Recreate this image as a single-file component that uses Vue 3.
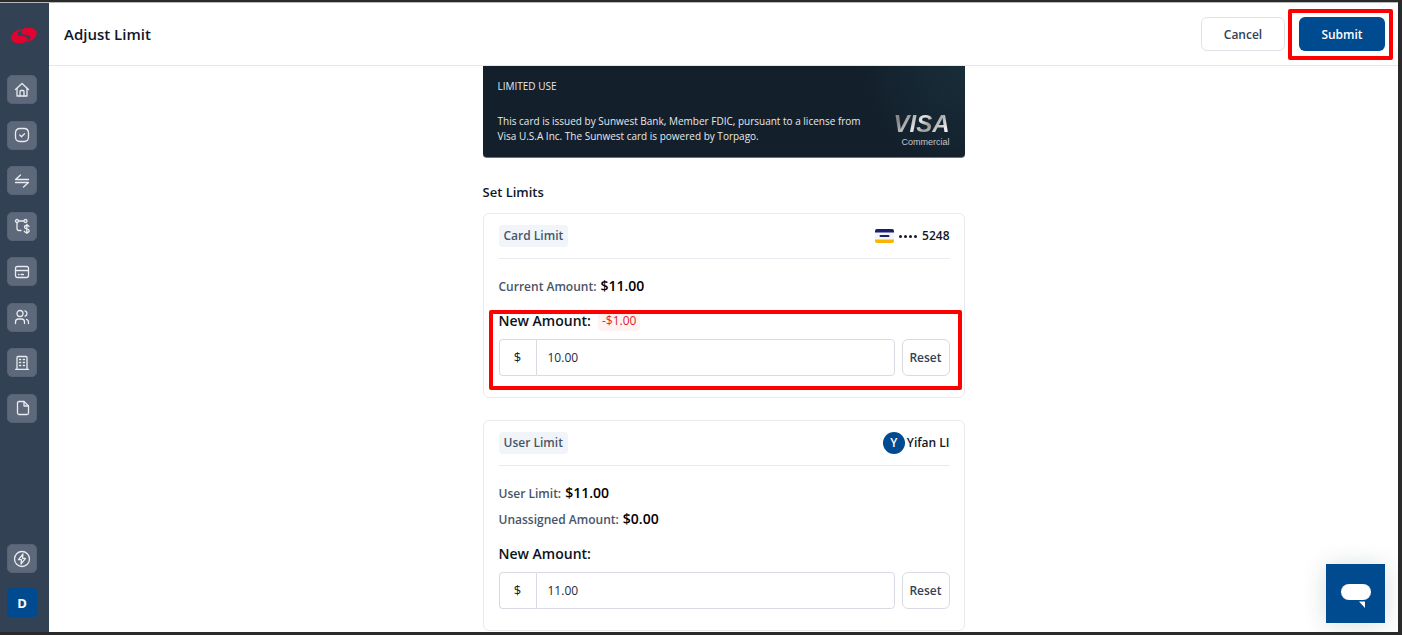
<script setup>
import { ref } from 'vue'

const cardAmount = ref('10.00')
const userAmount = ref('11.00')

const navItems = [
  { label: 'Home', paths: ['M1.5 7.500 8 1.500 14.500 7.500', 'M3 6.500V14h10V6.500', 'M6 14V9.500q0-1 1-1h2q1 0 1 1V14'] },
  { label: 'Tasks', paths: ['M6 1.500h4Q14.500 1.500 14.500 6v4Q14.500 14.500 10 14.500H6Q1.500 14.500 1.500 10V6Q1.500 1.500 6 1.500Z', 'M5.800 8l1.700 1.700 3-3'] },
  { label: 'Transfers', paths: ['M14.500 6.500h-13L6.500 2', 'M1.500 9.500h13L9.500 14'] },
  { label: 'Bill pay', paths: ['M4.500 3h5.500', 'M3 4.500v6q0 2 2 2h2', 'M4.500 3a1.500 1.500 0 1 1-3 0a1.500 1.500 0 1 1 3 0', 'M13 3a1.500 1.500 0 1 1-3 0a1.500 1.500 0 1 1 3 0', 'M15 8.500q-.5-1-2.200-1-2.300 0-2.300 1.700 0 1.300 2.300 1.700 2.400.5 2.400 1.900 0 1.700-2.400 1.700-2 0-2.500-1.300', 'M12.800 6.300v9.500'] },
  { label: 'Cards', paths: ['M3.500 2.500h9q2 0 2 2v7q0 2-2 2h-9q-2 0-2-2v-7Q1.500 2.500 3.500 2.500Z', 'M1.500 6.500h13', 'M4.500 10.500h.5', 'M7 10.500h2.500'] },
  { label: 'Users', paths: ['M9 4.500a3 3 0 1 1-6 0a3 3 0 1 1 6 0', 'M1.500 14.500v-1.500q0-3 3-3h3q3 0 3 3v1.500', 'M11 1.800q2 .7 2 2.700t-2 2.700', 'M12.500 10.300q2 .7 2 2.700v1.500'] },
  { label: 'Company', paths: ['M3 14V2.500q0-1 1-1h8q1 0 1 1V14', 'M1.500 14.300h13', 'M5.500 4.500h1.200M9.300 4.500h1.200M5.500 7.500h1.200M9.300 7.500h1.200M5.500 10.500h1.200M9.300 10.500h1.200'] },
  { label: 'Documents', paths: ['M10 1.500H5q-1.500 0-1.500 1.500v10q0 1.500 1.500 1.500h8q1.500 0 1.500-1.500V6Z', 'M10 1.500V6H14.500'] },
]
</script>

<template>
  <div class="frame">
    <div class="app">
      <aside class="sidebar">
        <svg class="logo" viewBox="32 82 78 51" aria-label="Sunwest">
          <path d="M70 88C46 89 33 102 33 115C33 126 45 132 62 131C73 130 82 124 81 116C80 110 70 110 61 109C51 108 49 103 54 97C58 92 63 90 70 88Z" fill="#e4032e" />
          <path d="M72 127C96 126 109 113 109 100C109 89 97 83 80 84C69 85 61 91 62 98C63 104 72 105 81 106C91 107 93 112 88 118C84 123 79 125 72 127Z" fill="#e4032e" />
        </svg>
        <nav class="nav">
          <a v-for="item in navItems" :key="item.label" href="#" class="tile" :aria-label="item.label">
            <svg viewBox="0 0 16 16" class="icon"><path v-for="d in item.paths" :key="d" :d="d" /></svg>
          </a>
        </nav>
        <div class="foot">
          <a href="#" class="tile" aria-label="Quick actions">
            <svg viewBox="0 0 18 18" class="icon bolt">
              <circle cx="9" cy="9" r="7.500" /><path d="M10 4 5.500 9.700h3L8 14l4.500-5.700h-3Z" />
            </svg>
          </a>
          <button type="button" class="avatar-tile">D</button>
        </div>
      </aside>

      <div class="page">
        <header class="header">
          <h1>Adjust Limit</h1>
          <div class="actions">
            <button type="button" class="btn cancel">Cancel</button>
            <div class="submit-wrap">
              <button type="button" class="btn submit">Submit</button>
              <span class="mark mark-submit"></span>
            </div>
          </div>
        </header>

        <main class="content">
          <div class="column">
            <section class="bank-card">
              <p class="limited">LIMITED USE</p>
              <div class="legal-row">
                <p class="legal">This card is issued by Sunwest Bank, Member FDIC, pursuant to a license from<br />Visa U.S.A Inc. The Sunwest card is powered by Torpago.</p>
                <div class="visa"><span class="visa-name">VISA</span><span class="visa-kind">Commercial</span></div>
              </div>
            </section>

            <h2>Set Limits</h2>

            <section class="panel">
              <div class="panel-head">
                <span class="chip">Card Limit</span>
                <span class="owner">
                  <svg class="mini-card" viewBox="0 0 19 14" aria-hidden="true">
                    <rect x="0" y="0" width="19" height="14" rx="2" fill="#f4f5fa" />
                    <path d="M0 3.500V2Q0 0 2 0H17Q19 0 19 2V3.500Z" fill="#1a1f71" />
                    <path d="M0 10.500V12Q0 14 2 14H17Q19 14 19 12V10.500Z" fill="#f7b600" />
                    <rect x="4.500" y="6" width="10" height="2" rx="1" fill="#1a1f71" />
                  </svg>
                  <span class="dots"><i></i><i></i><i></i><i></i></span>
                  <span>5248</span>
                </span>
              </div>
              <dl class="facts">
                <div><dt>Current Amount:</dt><dd>$11.00</dd></div>
              </dl>
              <div class="field">
                <div class="label-row">
                  <label for="card-amount">New Amount:</label>
                  <span class="delta">-$1.00</span>
                </div>
                <div class="control">
                  <span class="currency">$</span>
                  <input id="card-amount" v-model="cardAmount" type="text" />
                  <button type="button" class="reset">Reset</button>
                </div>
                <span class="mark mark-field"></span>
              </div>
            </section>

            <section class="panel">
              <div class="panel-head">
                <span class="chip">User Limit</span>
                <span class="owner person"><span class="avatar">Y</span>Yifan LI</span>
              </div>
              <dl class="facts">
                <div><dt>User Limit:</dt><dd>$11.00</dd></div>
                <div><dt>Unassigned Amount:</dt><dd>$0.00</dd></div>
              </dl>
              <div class="field">
                <div class="label-row"><label for="user-amount">New Amount:</label></div>
                <div class="control">
                  <span class="currency">$</span>
                  <input id="user-amount" v-model="userAmount" type="text" />
                  <button type="button" class="reset">Reset</button>
                </div>
              </div>
            </section>
          </div>
        </main>
      </div>

      <button type="button" class="chat" aria-label="Open chat">
        <svg viewBox="0 0 30 24"><rect x="0" y="0" width="30" height="16" rx="8" fill="#fff" /><path d="M18 17.500h6V24Z" fill="#fff" /></svg>
      </button>
    </div>
  </div>
</template>

<style>
body {
  background: #2b2a2a;
}
</style>

<style scoped>
* {
  box-sizing: border-box;
}
.frame {
  height: 100vh;
  padding: 2px 4px 3px 0;
  background: #2b2a2a;
  font-family: "Open Sans", "Noto Sans", sans-serif;
  font-size: 12px;
  color: #0f172a;
}
.app {
  position: relative;
  display: flex;
  height: 100%;
  overflow: hidden;
  background: #fff;
  border-top: 1px solid #b9b9b9;
}
h1, h2, p, dl, dd {
  margin: 0;
}
button, input {
  font-family: inherit;
}
.sidebar {
  flex: none;
  display: flex;
  flex-direction: column;
  align-items: center;
  width: 49px;
  padding: 24px 5px 15px 0;
  background: #334155;
}
.logo {
  width: 26px;
  height: 17px;
  margin: 0 0 31px 3px;
}
.nav {
  display: flex;
  flex-direction: column;
  justify-content: space-between;
  height: 348px;
}
.tile {
  display: grid;
  place-items: center;
  width: 30px;
  height: 29px;
  border-radius: 5px;
  background: #5d687a;
  border: 1px solid #566276;
}
.icon {
  width: 16px;
  height: 16px;
  fill: none;
  stroke: #e8ebef;
  stroke-width: 1.3;
  stroke-linecap: round;
  stroke-linejoin: round;
}
.bolt {
  width: 18px;
  height: 18px;
}
.foot {
  display: flex;
  flex-direction: column;
  gap: 15px;
  margin-top: auto;
}
.avatar-tile {
  width: 30px;
  height: 29px;
  padding: 0;
  border: 0;
  border-radius: 4px;
  background: #004b8f;
  color: #fff;
  font-size: 13px;
  font-weight: 700;
}
.page {
  flex: 1;
  min-width: 0;
  display: flex;
  flex-direction: column;
}
.header {
  flex: none;
  display: flex;
  align-items: center;
  justify-content: space-between;
  height: 63px;
  padding: 0 13px 0 15px;
  border-bottom: 1px solid #e5e7eb;
}
h1 {
  font-size: 15px;
  font-weight: 600;
}
.actions {
  display: flex;
  gap: 14px;
}
.btn {
  height: 34px;
  padding: 0;
  border-radius: 6px;
  font-size: 12px;
  font-weight: 600;
}
.cancel {
  width: 84px;
  background: #fff;
  border: 1px solid #dfe3e8;
  color: #334155;
}
.submit {
  width: 86px;
  border: 0;
  background: #004b8f;
  color: #fff;
}
.submit-wrap, .field {
  position: relative;
}
.mark {
  position: absolute;
  border: 4px solid #fe0000;
  border-radius: 2px;
  pointer-events: none;
}
.mark-submit {
  inset: -8px -8px -9px -11px;
}
.mark-field {
  inset: -1px -12px -14px -10px;
}
.content {
  flex: 1;
  min-height: 0;
  padding: 0 16px;
  overflow: hidden;
}
.column {
  max-width: 482px;
  margin: 0 auto;
}
.bank-card {
  padding: 13px 15px 10px;
  border-radius: 0 0 4px 4px;
  border-bottom: 1px solid #64748b;
  background: radial-gradient(circle at top right, #182e39 0, #131f2b 110px);
  color: #e6e9ec;
  font-size: 10px;
  line-height: 15px;
}
.legal-row {
  display: flex;
  justify-content: space-between;
  align-items: center;
  margin-top: 17px;
}
.legal {
  white-space: nowrap;
}
.visa {
  display: flex;
  flex-direction: column;
  align-items: flex-end;
}
.visa-name {
  background: linear-gradient(135deg, #888 20%, #e6e6e6 45%, #9a9a9a 60%, #eee 85%);
  background-clip: text;
  color: transparent;
  font-family: "Liberation Sans", Arial, sans-serif;
  font-size: 24px;
  line-height: 26px;
  font-weight: 700;
  font-style: italic;
}
.visa-kind {
  font-family: "Liberation Sans", Arial, sans-serif;
  font-size: 9px;
  line-height: 10px;
  color: #c3c6ca;
}
h2 {
  margin: 24px 0 11px;
  font-size: 13px;
  line-height: 20px;
  font-weight: 600;
}
.panel {
  padding: 11px 14px 21px 15px;
  border: 1px solid #e8eaed;
  border-radius: 6px;
}
.panel + .panel {
  margin-top: 22px;
}
.panel-head {
  display: flex;
  align-items: center;
  justify-content: space-between;
  padding-bottom: 11px;
  border-bottom: 1px solid #e8ebf0;
}
.chip {
  padding: 0 5px;
  border-radius: 4px;
  background: #f1f5f9;
  color: #475569;
  line-height: 22px;
  font-weight: 600;
}
.owner {
  display: flex;
  align-items: center;
  gap: 5px;
  color: #101828;
  font-weight: 600;
  line-height: 22px;
}
.mini-card {
  width: 19px;
  height: 14px;
}
.dots {
  display: flex;
  gap: 2px;
}
.dots i {
  width: 3px;
  height: 3px;
  border-radius: 50%;
  background: #101828;
}
.person {
  gap: 2px;
}
.avatar {
  width: 22px;
  height: 22px;
  border-radius: 50%;
  background: #004b8f;
  color: #fff;
  text-align: center;
}
.facts {
  display: grid;
  gap: 1px;
  margin: 15px 0 12px;
}
.facts div {
  display: flex;
  align-items: baseline;
  gap: 4px;
  line-height: 24px;
}
dt {
  color: #475569;
  font-weight: 600;
}
dd {
  font-size: 14px;
  font-weight: 600;
  color: #000;
}
.label-row {
  display: flex;
  align-items: center;
  gap: 7px;
  line-height: 20px;
}
label {
  font-weight: 600;
  font-size: 14px;
  color: #0b1220;
}
.delta {
  padding: 0 4px;
  border-radius: 4px;
  background: #fef2f2;
  color: #dc2626;
}
.control {
  display: flex;
  height: 37px;
  margin-top: 8px;
}
.currency {
  width: 37px;
  border: 1px solid #d8dce2;
  border-right: 0;
  border-radius: 4px 0 0 4px;
  text-align: center;
  font-size: 13px;
  line-height: 35px;
}
input {
  flex: 1;
  min-width: 0;
  padding: 0 11px;
  border: 1px solid #d8dce2;
  border-radius: 0 4px 4px 0;
  background: #fff;
  color: #1e293b;
  font-size: 12px;
}
.reset {
  width: 48px;
  margin-left: 7px;
  padding: 0;
  border: 1px solid #d8dce2;
  border-radius: 6px;
  background: #fff;
  color: #334155;
  font-size: 12px;
  font-weight: 600;
}
.chat {
  position: absolute;
  right: 13px;
  bottom: 9px;
  display: grid;
  place-items: center;
  width: 59px;
  height: 59px;
  padding: 4px 0 0;
  border: 0;
  background: #004b8f;
  box-shadow: 0 2px 24px rgba(15, 50, 50, 0.16);
}
.chat svg {
  width: 30px;
  height: 24px;
}
</style>
